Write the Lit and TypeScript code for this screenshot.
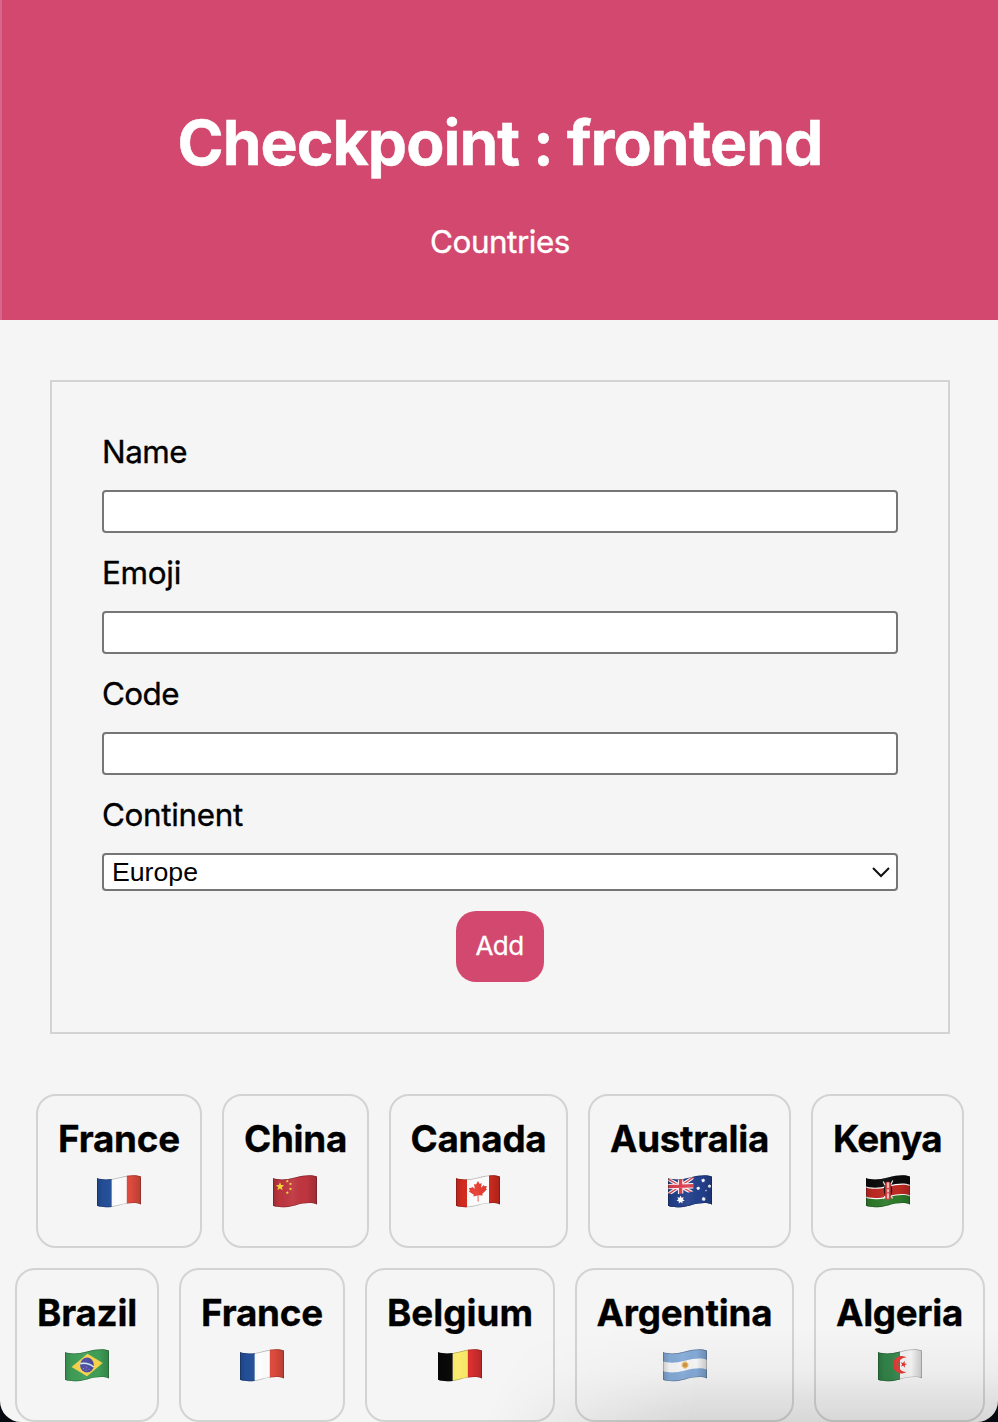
import { LitElement, html, svg, css } from "lit";
import { customElement, property } from "lit/decorators.js";

// Text label whose tracking is adjusted so the word fills a given width.
@customElement("fit-label")
class FitLabel extends LitElement {
  @property({ type: Number }) span = 0;
  @property() text = "";
  static styles = css`
    :host { display: inline-block; white-space: nowrap; }
  `;
  render() {
    return html`<span>${this.text}</span>`;
  }
  firstUpdated() {
    const el = this.renderRoot.querySelector("span") as HTMLElement;
    const natural = el.getBoundingClientRect().width;
    el.style.letterSpacing = `${(this.span - natural) / this.text.length}px`;
  }
}

const edge = (y: number) => `M0 ${3 + y} C5 ${5 + y} 13 ${5 + y} 22 ${2.6 + y} S38 ${-0.6 + y} 44 ${1.6 + y}`;
const edgeBack = (y: number) => `L44 ${1.6 + y} C38 ${-0.6 + y} 31 ${0.2 + y} 22 ${2.6 + y} S5 ${5 + y} 0 ${3 + y}Z`;
const band = (a: number, b: number, fill: string) => svg`<path d=${edge(a) + edgeBack(b)} fill=${fill} />`;
const star = (cx: number, cy: number, r: number, n = 5, inner = 0.42, rot = -90) => {
  const pts: string[] = [];
  for (let i = 0; i < n * 2; i++) {
    const a = ((rot + (i * 180) / n) * Math.PI) / 180;
    const q = i % 2 ? r * inner : r;
    pts.push(`${(cx + q * Math.cos(a)).toFixed(2)},${(cy + q * Math.sin(a)).toFixed(2)}`);
  }
  return pts.join(" ");
};
const bars = (a: string, b: string, c: string) => svg`
  <rect width="14.8" height="34" fill=${a} /><rect x="14.8" width="15" height="34" fill=${b} /><rect x="29.8" width="15" height="34" fill=${c} />`;

const flags: Record<string, () => unknown> = {
  fr: () => bars("#24509a", "#fdfdfd", "#df4b3e"),
  be: () => bars("#080808", "#fbea68", "#d9302f"),
  cn: () => svg`
    <rect width="44" height="34" fill="#bf353f" />
    <polygon points=${star(7, 11.6, 4.4, 5, 0.46)} fill="#f5d83c" />
    <polygon points=${star(14.3, 6.2, 1.6, 5, 0.5)} fill="#f5d83c" />
    <polygon points=${star(17.5, 9, 1.6, 5, 0.5)} fill="#f5d83c" />
    <polygon points=${star(17.5, 14, 1.6, 5, 0.5)} fill="#f5d83c" />
    <polygon points=${star(14.3, 17.7, 1.6, 5, 0.5)} fill="#f5d83c" />`,
  ca: () => svg`
    <rect width="44" height="34" fill="#fdfdfd" />
    <rect width="11" height="34" fill="#d52b20" /><rect x="33" width="11" height="34" fill="#cf2a1f" />
    <path d="M22 6l1.7 3 2-.9-.6 4.7 2.8-2.8.5 1.3 2.5-.4-.9 2.8 1 .6-4.8 4.6.5 1.7-4.3-.3.2 6.1h-.9l-.1-6-4.2 1.2.4-1.8-4.9-3.4 1-.8-1-2.6 2.5.1.5-1.4 2.9 2.1-.8-4.7 2 .5z" fill="#e63a30" />`,
  au: () => svg`
    <rect width="44" height="34" fill="#23408c" />
    <g transform="skewY(-2)">
      <path d="M0 4L25.5 19.5M0 19.5L25.5 3" stroke="#fff" stroke-width="3.6" />
      <path d="M0 4L25.5 19.5M0 19.5L25.5 3" stroke="#dc4050" stroke-width="1.3" />
      <path d="M12.6 2v18M0 11.6h25.5" stroke="#fff" stroke-width="5.4" />
      <path d="M12.6 2v18M0 11.6h25.5" stroke="#dc4050" stroke-width="3.4" />
    </g>
    <path d="M0 18.8C8 20 17 18.5 25.5 16.2V2H44V34H0z" fill="#23408c" />
    <polygon points=${star(12.6, 24.8, 4.2, 7, 0.55)} fill="#fff" />
    <polygon points=${star(35.2, 5.5, 2.2, 7, 0.6)} fill="#fff" />
    <polygon points=${star(30.2, 13.3, 2.1, 7, 0.6)} fill="#fff" />
    <polygon points=${star(41.5, 11.2, 2, 7, 0.6)} fill="#fff" />
    <polygon points=${star(38, 15.6, 1.2)} fill="#fff" />
    <polygon points=${star(35.7, 24, 2.3, 7, 0.6)} fill="#fff" />`,
  ke: () => svg`
    <rect width="44" height="34" fill="#fff" />
    ${band(-2, 8.2, "#0b0b0b")}${band(9.4, 18.6, "#bd2a22")}${band(19.8, 30, "#2e7a2b")}
    <path d="M17.2 6.5l2 4M26.8 5.5l-2 4M19 21l-1.5 3M25 20.5l1.5 3" stroke="#f4e6e4" stroke-width="1.2" />
    <ellipse cx="22" cy="15.6" rx="4.2" ry="7.4" fill="#1a0b0b" />
    <rect x="19.3" y="6.8" width="5.4" height="18" rx="2.4" fill="#d63a3a" />
    <path d="M22 7.5v5.5M22 14.3v3M22 18.5v5" stroke="#fbe0e0" stroke-width="1.5" />`,
  br: () => svg`
    <rect width="44" height="34" fill="#3f9e57" />
    <path d="M6.5 18L22.5 4.8 37.8 14 22 27.2z" fill="#f8d34b" />
    <ellipse cx="22" cy="16" rx="6.9" ry="7.6" fill="#4a489f" />
    <path d="M15.2 14.6c5-.9 10 .3 13.6 3.4" stroke="#cfeaf0" stroke-width="1.6" fill="none" />
    <path d="M18 19.5h.8m2 1.5h.8m2-.7h.8m-3-2.2h.8" stroke="#b9b8e8" stroke-width=".8" />`,
  ar: () => svg`
    <rect width="44" height="34" fill="#fafafa" />
    ${band(-2, 9.2, "#86addb")}${band(19, 30, "#86addb")}
    <polygon points=${star(22, 16, 4, 12, 0.75)} fill="#e9b765" />
    <circle cx="22" cy="16" r="2" fill="#cf8e3b" />`,
  dz: () => svg`
    <rect width="44" height="34" fill="#f6f6f6" /><rect width="22" height="34" fill="#33864a" />
    <path d="M28.8 8.6A8.8 8.8 0 1 0 28.8 22.8 7.2 7.2 0 1 1 28.8 8.6z" fill="#e3342f" />
    <polygon points=${star(25.6, 15.3, 3.6, 5, 0.4, -75)} fill="#e3342f" />`,
};

@customElement("country-flag")
class CountryFlag extends LitElement {
  @property() code = "";
  static styles = css`
    :host { display: block; width: 44px; height: 34px; }
    .art { display: block; overflow: visible; }
  `;
  render() {
    const shape = edge(0) + edgeBack(27.8);
    return html`<svg class="art" width="44" height="34" viewBox="0 0 44 34">
      <defs>
        <clipPath id="cloth"><path d=${shape} /></clipPath>
        <linearGradient id="fold">
          <stop offset="0" stop-color="#000" stop-opacity=".16" />
          <stop offset=".15" stop-color="#000" stop-opacity=".02" />
          <stop offset=".45" stop-color="#fff" stop-opacity=".06" />
          <stop offset=".75" stop-color="#000" stop-opacity="0" />
          <stop offset="1" stop-color="#000" stop-opacity=".18" />
        </linearGradient>
      </defs>
      <g clip-path="url(#cloth)">
        ${flags[this.code]?.()}
        <path d=${shape} fill="url(#fold)" />
        <path d=${shape} fill="none" stroke="#000" stroke-opacity=".28" stroke-width="1.4" />
      </g>
    </svg>`;
  }
}

const rows = [
  [["France", "fr", 166, 122], ["China", "cn", 147, 103], ["Canada", "ca", 179, 136], ["Australia", "au", 203, 159], ["Kenya", "ke", 153, 109]],
  [["Brazil", "br", 144, 100], ["France", "fr", 166, 122], ["Belgium", "be", 190, 146], ["Argentina", "ar", 219, 176], ["Algeria", "dz", 171, 127]],
] as [string, string, number, number][][];

@customElement("app-root")
class AppRoot extends LitElement {
  static styles = css`
    * { box-sizing: border-box; }
    :host {
      display: block; position: relative; height: 1422px; overflow: hidden;
      background: #f5f5f5; color: #000; font: 400 31.4px/38px Inter, sans-serif;
    }
    .top {
      height: 320px; padding-top: 105px; background: #d2486e; color: #fff;
      border-left: 2px solid #d9668a; text-align: center;
    }
    .title { margin: 0; font-size: 62.4px; line-height: 76px; font-weight: 700; -webkit-text-stroke: .5px currentColor; }
    .sub { margin: 42px 0 0; -webkit-text-stroke: .35px currentColor; }
    .form {
      display: flex; flex-direction: column; margin: 60px 48px 0 50px; height: 654px;
      padding: 50px; border: 2px solid #d3d3d3;
    }
    .label { height: 39px; padding-top: 1px; margin-bottom: 19px; -webkit-text-stroke: .35px currentColor; }
    .field {
      height: 43px; margin: 0 0 20px; padding: 2px; border: 2px solid #767676;
      border-radius: 4px; background: #fff; outline: none; width: 100%;
    }
    .select {
      display: flex; align-items: center; justify-content: space-between; flex: none;
      height: 38px; margin-bottom: 20px; padding: 0 6px 0 8px; border: 2px solid #767676;
      border-radius: 4px; background: #fff; font: 26.67px/30px "Liberation Sans", Arial, sans-serif;
    }
    .add {
      align-self: center; width: 88px; height: 71px; padding: 0 1px 1px 0; border: 0; border-radius: 20px;
      background: #d2486e; color: #fff; font: 400 26px/30px Inter, sans-serif; -webkit-text-stroke: .3px currentColor;
    }
    .list { display: flex; flex-direction: column; gap: 20px; margin: 60px 0 0 2px; }
    .row { display: flex; justify-content: center; gap: 20px; }
    .card {
      display: flex; flex-direction: column; align-items: center; flex: none; height: 154px;
      padding-top: 20px; border: 2px solid #d3d3d3; border-radius: 20px;
    }
    .name { margin: 0 0 14px; font-size: 36.8px; line-height: 45px; font-weight: 700; -webkit-text-stroke: .3px currentColor; }
    .card country-flag[code="cn"], .card country-flag[code="ca"] { margin-right: 1px; }
    .shade {
      position: absolute; inset: auto 0 0 0; height: 100px; pointer-events: none;
      background: linear-gradient(to bottom, transparent 5%, rgba(0,0,0,.03) 50%, rgba(0,0,0,.12));
      -webkit-mask: linear-gradient(105deg, transparent 50%, #000 70%);
      mask: linear-gradient(105deg, transparent 50%, #000 70%);
    }
    .corners { position: absolute; left: 0; right: 0; bottom: 0; height: 22px; overflow: hidden; pointer-events: none; }
    .corners::after {
      content: ""; position: absolute; inset: -60px 0 0; border-radius: 0 0 21px 21px; box-shadow: 0 0 0 30px #06090f;
    }
  `;
  render() {
    return html`
      <header class="top">
        <h1 class="title"><fit-label span="645" text="Checkpoint : frontend"></fit-label></h1>
        <p class="sub"><fit-label span="140" text="Countries"></fit-label></p>
      </header>
      <form class="form">
        <label class="label"><fit-label span="85" text="Name"></fit-label></label>
        <input class="field" />
        <label class="label"><fit-label span="79" text="Emoji"></fit-label></label>
        <input class="field" />
        <label class="label"><fit-label span="77" text="Code"></fit-label></label>
        <input class="field" />
        <label class="label"><fit-label span="141" text="Continent"></fit-label></label>
        <div class="select">
          <span>Europe</span>
          <svg width="18" height="12" viewBox="0 0 18 12"><path d="M1 2l8 8 8-8" fill="none" stroke="#111" stroke-width="2" /></svg>
        </div>
        <button class="add" type="button"><fit-label span="48" text="Add"></fit-label></button>
      </form>
      <section class="list">
        ${rows.map((row) => html`<div class="row">
          ${row.map(([name, code, width, span]) => html`<article class="card" style="width:${width}px">
            <h3 class="name"><fit-label .span=${span} .text=${name}></fit-label></h3>
            <country-flag code=${code}></country-flag>
          </article>`)}
        </div>`)}
      </section>
      <div class="shade"></div>
      <div class="corners"></div>
    `;
  }
}
